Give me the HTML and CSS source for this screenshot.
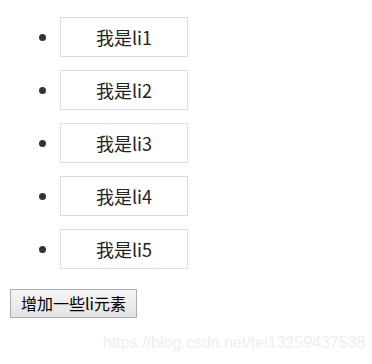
FILE: index.html
```html
<!DOCTYPE html>
<html lang="zh">
<head>
<meta charset="utf-8">
<link rel="stylesheet" href="styles.css">
</head>
<body>
<ul class="list">
  <li class="item"><div class="box">我是li1</div></li>
  <li class="item"><div class="box">我是li2</div></li>
  <li class="item"><div class="box">我是li3</div></li>
  <li class="item"><div class="box">我是li4</div></li>
  <li class="item"><div class="box">我是li5</div></li>
</ul>
<button class="add-btn">增加一些li元素</button>
<div class="watermark">https://blog.csdn.net/tel13259437538</div>
</body>
</html>
```

FILE: styles.css
```css
html, body {
  margin: 0;
  padding: 0;
  background: #fff;
}
body {
  position: relative;
  width: 372px;
  height: 364px;
  overflow: hidden;
  font-family: "Noto Sans CJK SC", "Microsoft YaHei", sans-serif;
  color: #333;
}
.list {
  margin: 17px 0 0 0;
  padding: 0 0 0 60px;
  list-style: disc;
}
.item {
  font-size: 18px;
  margin-bottom: 13px;
}
.item::marker {
  color: #333;
  font-size: 18px;
}
.box {
  box-sizing: border-box;
  width: 128px;
  height: 40px;
  line-height: 38px;
  border: 1px solid #ddd;
  text-align: center;
  color: #222;
}
.add-btn {
  display: block;
  margin: 20px 0 0 10px;
  width: 127px;
  height: 29px;
  padding: 0;
  font-family: "Noto Sans CJK SC", sans-serif;
  font-size: 16px;
  line-height: 27px;
  color: #000;
  border: 1px solid #adadad;
  border-radius: 0;
  background: linear-gradient(#f5f5f5, #e3e3e3);
}
.watermark {
  position: absolute;
  left: 103px;
  top: 334px;
  font-family: "Liberation Sans", Arial, sans-serif;
  font-size: 16px;
  color: #eeeeee;
  white-space: nowrap;
}
```
